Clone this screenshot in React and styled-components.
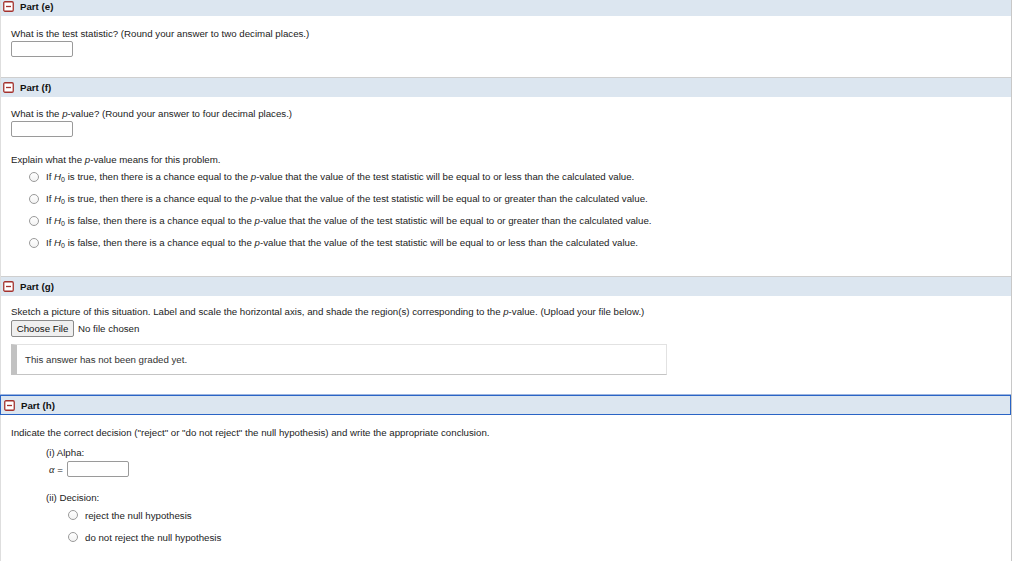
import React from 'react';
import styled, { createGlobalStyle } from 'styled-components';

const GlobalStyle = createGlobalStyle`
  html, body {
    margin: 0;
    padding: 0;
    background: #fff;
    overflow: hidden;
  }
  body {
    font-family: "Liberation Sans", Arial, sans-serif;
    font-size: 9.7px;
    color: #222;
  }
`;

const Page = styled.div`
  width: 1010px;
  min-height: 570px;
  margin-top: -4px;
  border-left: 1px solid #dedede;
  border-right: 1px solid #c8c8c8;
`;

const Header = styled.div`
  display: flex;
  align-items: center;
  gap: 6px;
  height: 19px;
  padding-left: 2px;
  background: #dce6f0;
  border-top: 1px solid ${(p) => (p.$first ? '#dce6f0' : '#cfcfcf')};
  font-weight: bold;
  font-size: 9.7px;
  color: #111;
  ${(p) =>
    p.$active &&
    `
    height: 18px;
    border: 1px solid #2a64c5;
    box-shadow: 0 -1px 0 #9db5e0;
    margin-left: -1px;
    padding-left: 3px;
  `}
`;

const Body = styled.div`
  padding: ${(p) => p.$pad || '11px 10px 20px'};
`;

const Line = styled.div`
  line-height: 12px;
  margin-top: ${(p) => p.$mt || 0}px;
  padding-left: ${(p) => p.$indent || 0}px;
`;

const TextBox = styled.span`
  display: block;
  width: 60px;
  height: 14px;
  margin-top: ${(p) => p.$mt || 0}px;
  border: 1px solid #9a9a9a;
  border-radius: 2px;
  background: #fff;
`;

const RadioList = styled.div`
  display: flex;
  flex-direction: column;
  padding-left: ${(p) => p.$indent}px;
  margin-top: ${(p) => p.$mt || 0}px;
`;

const RadioRow = styled.label`
  display: flex;
  align-items: center;
  gap: 7px;
  height: 22px;
`;

const Circle = styled.span`
  width: 8px;
  height: 8px;
  border-radius: 50%;
  border: 1px solid #9a9a9a;
  background: linear-gradient(#fff, #f3f3f3);
  flex: none;
`;

const FileRow = styled.div`
  display: flex;
  align-items: center;
  gap: 4px;
  margin-top: 2px;
`;

const FileButton = styled.span`
  display: inline-flex;
  align-items: center;
  justify-content: center;
  width: 61px;
  height: 15px;
  border: 1px solid #8a8a8a;
  border-radius: 2px;
  background: #efefef;
  color: #111;
`;

const Graded = styled.div`
  width: 641px;
  height: 29px;
  margin-top: 7px;
  display: flex;
  align-items: center;
  padding-left: 8px;
  border: 1px solid #e2e2e2;
  border-bottom-color: #c4c4c4;
  border-left: 6px solid #c2c2c2;
  color: #333;
`;

const AlphaRow = styled.div`
  display: flex;
  align-items: center;
  gap: 4px;
  padding-left: 38px;
  margin-top: 2px;
  height: 16px;
`;

const Italic = styled.i`
  font-family: "Liberation Serif", "Times New Roman", serif;
  font-size: 10.5px;
`;

const Sub = styled.sub`
  font-size: 7px;
  vertical-align: -2px;
`;

function Toggle() {
  return (
    <svg width="11" height="11" viewBox="0 0 11 11">
      <rect x="0.75" y="0.75" width="9.5" height="9.5" rx="1.2" fill="#fff" stroke="#a4322e" strokeWidth="1.3" />
      <line x1="3" y1="5.5" x2="8" y2="5.5" stroke="#a4322e" strokeWidth="1.3" />
    </svg>
  );
}

function Part({ label, first, active, pad, children }) {
  return (
    <section>
      <Header $first={first} $active={active}>
        <Toggle />
        <span>{label}</span>
      </Header>
      <Body $pad={pad}>{children}</Body>
    </section>
  );
}

const H0 = () => (
  <>
    <i>H</i>
    <Sub>0</Sub>
  </>
);

const P = () => <i>p</i>;

const pOptions = [
  ['true', 'less'],
  ['true', 'greater'],
  ['false', 'greater'],
  ['false', 'less'],
];

export default function App() {
  return (
    <>
      <GlobalStyle />
      <Page>
        <Part label="Part (e)" first pad="12px 10px 20px">
          <Line>What is the test statistic? (Round your answer to two decimal places.)</Line>
          <TextBox $mt={1} />
        </Part>

        <Part label="Part (f)" pad="11px 10px 22px">
          <Line>What is the <P />-value? (Round your answer to four decimal places.)</Line>
          <TextBox $mt={1} />
          <Line $mt={17}>Explain what the <P />-value means for this problem.</Line>
          <RadioList $indent={18}>
            {pOptions.map(([truth, cmp], i) => (
              <RadioRow key={i}>
                <Circle />
                <span>
                  If <H0 /> is {truth}, then there is a chance equal to the <P />-value that the value of
                  the test statistic will be equal to or {cmp} than the calculated value.
                </span>
              </RadioRow>
            ))}
          </RadioList>
        </Part>

        <Part label="Part (g)" pad="10px 10px 20px">
          <Line>
            Sketch a picture of this situation. Label and scale the horizontal axis, and shade the
            region(s) corresponding to the <P />-value. (Upload your file below.)
          </Line>
          <FileRow>
            <FileButton>Choose File</FileButton>
            <span>No file chosen</span>
          </FileRow>
          <Graded>This answer has not been graded yet.</Graded>
        </Part>

        <Part label="Part (h)" active pad="12px 10px 20px">
          <Line>
            Indicate the correct decision ("reject" or "do not reject" the null hypothesis) and write
            the appropriate conclusion.
          </Line>
          <Line $mt={8} $indent={35}>(i) Alpha:</Line>
          <AlphaRow>
            <span>
              <Italic>α</Italic> =
            </span>
            <TextBox />
          </AlphaRow>
          <Line $mt={15} $indent={35}>(ii) Decision:</Line>
          <RadioList $indent={57}>
            <RadioRow>
              <Circle />
              <span>reject the null hypothesis</span>
            </RadioRow>
            <RadioRow>
              <Circle />
              <span>do not reject the null hypothesis</span>
            </RadioRow>
          </RadioList>
        </Part>
      </Page>
    </>
  );
}
